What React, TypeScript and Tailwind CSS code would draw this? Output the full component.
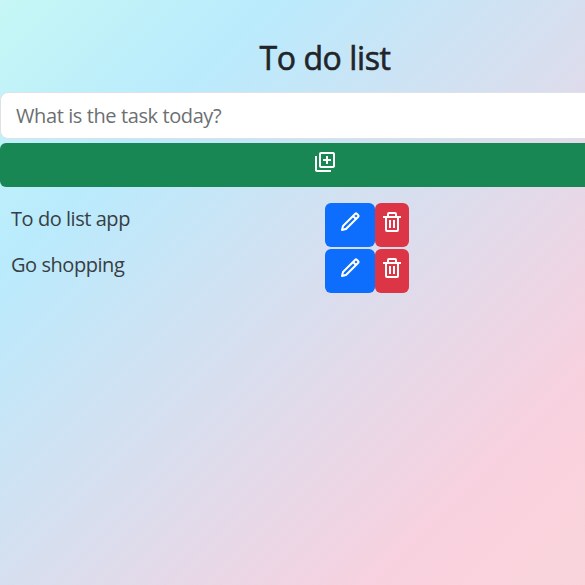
import { BiTrash, BiPencil } from "react-icons/bi";
import { MdOutlineLibraryAdd } from "react-icons/md";

const tasks = ["To do list app", "Go shopping"];

export default function App() {
  return (
    <div className="h-[585px] w-[585px] overflow-hidden bg-[linear-gradient(135deg,#c6f7f5_0%,#b9ebfd_23%,#f8d1df_82%,#fad4db_100%)] font-['Open_Sans','Noto_Sans',sans-serif] text-[#212529]">
      <div className="w-[650px] pt-[39px]">
        <h1 className="h-[53px] text-center text-[32px] leading-[38px] font-medium tracking-[-0.4px] [-webkit-text-stroke:0.6px_#212529]">
          To do list
        </h1>
        <input
          className="block h-[47px] w-full rounded-lg border border-[#dee2e6] bg-white px-[15px] text-[20px] tracking-[-0.4px] placeholder:text-[#6c6f73]"
          placeholder="What is the task today?"
        />
        <button className="mt-1 flex h-11 w-full justify-center rounded-md bg-[#198754] pt-[7px] text-white">
          <MdOutlineLibraryAdd size={24} />
        </button>
        <ul className="mt-4 flex flex-col gap-0.5">
          {tasks.map((task) => (
            <li key={task} className="flex h-11">
              <span className="w-[325px] pl-[11px] text-[20px] leading-[32px] tracking-[-0.45px] text-[#383e43]">{task}</span>
              <button className="flex h-11 w-[50px] justify-center rounded-md bg-[#0d6efd] pt-[7px] text-white">
                <BiPencil size={24} />
              </button>
              <button className="flex h-11 w-[34px] justify-center rounded-md bg-[#dc3545] pt-[7px] text-white">
                <BiTrash size={24} />
              </button>
            </li>
          ))}
        </ul>
      </div>
    </div>
  );
}
